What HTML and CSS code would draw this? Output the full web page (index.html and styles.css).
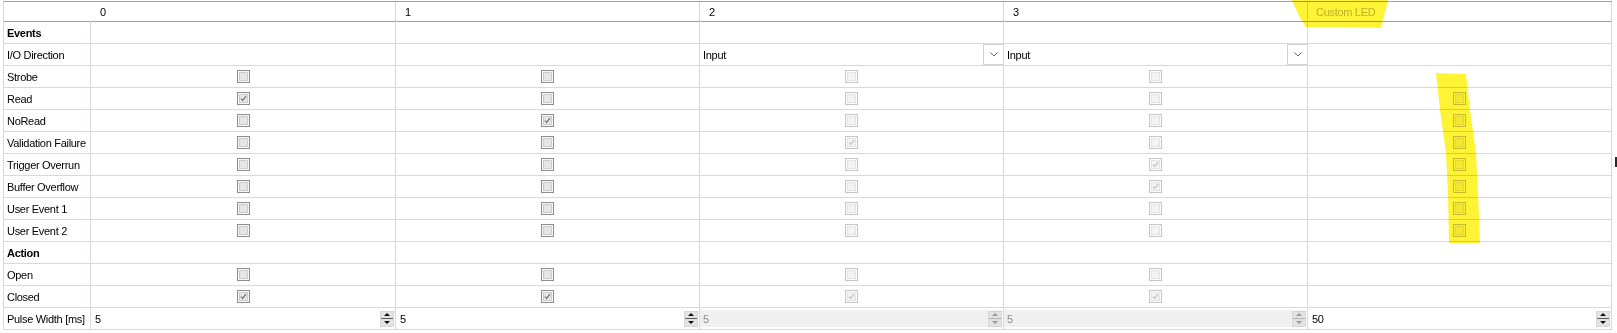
FILE: index.html
```html
<!DOCTYPE html>
<html lang="en">

<head>
    <meta charset="utf-8">
    <title>Output Settings</title>
    <link rel="stylesheet" href="styles.css">
</head>

<body id="app">
    <div id="grid">
        <!-- header -->
        <div class="cell hd first"></div>
        <div class="cell hd">0</div>
        <div class="cell hd">1</div>
        <div class="cell hd">2</div>
        <div class="cell hd">3</div>
        <div class="cell hd led">Custom LED</div>

        <div class="cell lbl bold">Events</div>
        <div class="cell"></div><div class="cell"></div><div class="cell"></div><div class="cell"></div><div class="cell"></div>

        <div class="cell lbl">I/O Direction</div>
        <div class="cell"></div>
        <div class="cell"></div>
        <div class="cell combo"><span>Input</span><span class="drop"><svg width="8" height="5" viewBox="0 0 8 5"><path d="M0.5 0.5 L4 4 L7.5 0.5" fill="none" stroke="#6a6a6a" stroke-width="1"/></svg></span></div>
        <div class="cell combo"><span>Input</span><span class="drop"><svg width="8" height="5" viewBox="0 0 8 5"><path d="M0.5 0.5 L4 4 L7.5 0.5" fill="none" stroke="#6a6a6a" stroke-width="1"/></svg></span></div>
        <div class="cell"></div>

        <div class="cell lbl">Strobe</div>
        <div class="cell c"><span class="chk"></span></div>
        <div class="cell c"><span class="chk"></span></div>
        <div class="cell c"><span class="chk dis"></span></div>
        <div class="cell c"><span class="chk dis"></span></div>
        <div class="cell"></div>

        <div class="cell lbl">Read</div>
        <div class="cell c"><span class="chk"><svg viewBox="0 0 13 13"><path d="M3.5 6.5 L5.5 8.8 L9.5 3.8"/></svg></span></div>
        <div class="cell c"><span class="chk"></span></div>
        <div class="cell c"><span class="chk dis"></span></div>
        <div class="cell c"><span class="chk dis"></span></div>
        <div class="cell c"><span class="chk dis"></span></div>

        <div class="cell lbl">NoRead</div>
        <div class="cell c"><span class="chk"></span></div>
        <div class="cell c"><span class="chk"><svg viewBox="0 0 13 13"><path d="M3.5 6.5 L5.5 8.8 L9.5 3.8"/></svg></span></div>
        <div class="cell c"><span class="chk dis"></span></div>
        <div class="cell c"><span class="chk dis"></span></div>
        <div class="cell c"><span class="chk dis"></span></div>

        <div class="cell lbl">Validation Failure</div>
        <div class="cell c"><span class="chk"></span></div>
        <div class="cell c"><span class="chk"></span></div>
        <div class="cell c"><span class="chk dis"><svg viewBox="0 0 13 13"><path d="M3.5 6.5 L5.5 8.8 L9.5 3.8"/></svg></span></div>
        <div class="cell c"><span class="chk dis"></span></div>
        <div class="cell c"><span class="chk dis"></span></div>

        <div class="cell lbl">Trigger Overrun</div>
        <div class="cell c"><span class="chk"></span></div>
        <div class="cell c"><span class="chk"></span></div>
        <div class="cell c"><span class="chk dis"></span></div>
        <div class="cell c"><span class="chk dis"><svg viewBox="0 0 13 13"><path d="M3.5 6.5 L5.5 8.8 L9.5 3.8"/></svg></span></div>
        <div class="cell c"><span class="chk dis"></span></div>

        <div class="cell lbl">Buffer Overflow</div>
        <div class="cell c"><span class="chk"></span></div>
        <div class="cell c"><span class="chk"></span></div>
        <div class="cell c"><span class="chk dis"></span></div>
        <div class="cell c"><span class="chk dis"><svg viewBox="0 0 13 13"><path d="M3.5 6.5 L5.5 8.8 L9.5 3.8"/></svg></span></div>
        <div class="cell c"><span class="chk dis"></span></div>

        <div class="cell lbl">User Event 1</div>
        <div class="cell c"><span class="chk"></span></div>
        <div class="cell c"><span class="chk"></span></div>
        <div class="cell c"><span class="chk dis"></span></div>
        <div class="cell c"><span class="chk dis"></span></div>
        <div class="cell c"><span class="chk dis"></span></div>

        <div class="cell lbl">User Event 2</div>
        <div class="cell c"><span class="chk"></span></div>
        <div class="cell c"><span class="chk"></span></div>
        <div class="cell c"><span class="chk dis"></span></div>
        <div class="cell c"><span class="chk dis"></span></div>
        <div class="cell c"><span class="chk dis"></span></div>

        <div class="cell lbl bold">Action</div>
        <div class="cell"></div><div class="cell"></div><div class="cell"></div><div class="cell"></div><div class="cell"></div>

        <div class="cell lbl">Open</div>
        <div class="cell c"><span class="chk"></span></div>
        <div class="cell c"><span class="chk"></span></div>
        <div class="cell c"><span class="chk dis"></span></div>
        <div class="cell c"><span class="chk dis"></span></div>
        <div class="cell"></div>

        <div class="cell lbl">Closed</div>
        <div class="cell c"><span class="chk"><svg viewBox="0 0 13 13"><path d="M3.5 6.5 L5.5 8.8 L9.5 3.8"/></svg></span></div>
        <div class="cell c"><span class="chk"><svg viewBox="0 0 13 13"><path d="M3.5 6.5 L5.5 8.8 L9.5 3.8"/></svg></span></div>
        <div class="cell c"><span class="chk dis"><svg viewBox="0 0 13 13"><path d="M3.5 6.5 L5.5 8.8 L9.5 3.8"/></svg></span></div>
        <div class="cell c"><span class="chk dis"><svg viewBox="0 0 13 13"><path d="M3.5 6.5 L5.5 8.8 L9.5 3.8"/></svg></span></div>
        <div class="cell"></div>

        <div class="cell lbl">Pulse Width [ms]</div>
        <div class="cell num"><div class="field"><span>5</span><span class="spin"><i class="up"></i><i class="dn"></i></span></div></div>
        <div class="cell num"><div class="field"><span>5</span><span class="spin"><i class="up"></i><i class="dn"></i></span></div></div>
        <div class="cell num"><div class="field off"><span>5</span><span class="spin"><i class="up"></i><i class="dn"></i></span></div></div>
        <div class="cell num"><div class="field off"><span>5</span><span class="spin"><i class="up"></i><i class="dn"></i></span></div></div>
        <div class="cell num"><div class="field"><span>50</span><span class="spin"><i class="up"></i><i class="dn"></i></span></div></div>
    </div>

    <!-- highlighter marks drawn over the grid -->
    <svg id="marker" width="1617" height="333" viewBox="0 0 1617 333">
        <polygon points="1292,0 1388,0 1381,28 1345,27 1306,27 1300,18" />
        <polygon points="1436,73 1466,74 1470,110 1476,153 1478,193 1480,243 1449,243 1448,193 1446,153 1440,110" />
    </svg>
    <span id="edge"></span>
</body>

</html>
```

FILE: styles.css
```css
#app * {
    box-sizing: border-box;
}

#app {
    margin: 0;
    position: relative;
    width: 1617px;
    height: 333px;
    background: #fff;
    color: #000;
    font-family: "Liberation Sans", Arial, sans-serif;
    font-size: 11px;
    letter-spacing: -0.3px;
    overflow: hidden;
}

#grid {
    display: grid;
    grid-template-columns: 87px 305px repeat(4, 304px);
    grid-template-rows: 20px;
    grid-auto-rows: 22px;
    width: max-content;
    margin: 1px 0 0 3px;
    border-top: 1px solid #a0a0a0;
    border-left: 1px solid #d5dae2;
}

.cell {
    display: flex;
    align-items: center;
    border-right: 1px solid #d5dae2;
    border-bottom: 1px solid #d5dae2;
    white-space: nowrap;
    overflow: hidden;
}

.hd {
    padding-left: 9px;
    border-bottom-color: #a0a0a0;
}

.hd.first {
    border-right-color: transparent;
}

.hd.led {
    padding-left: 8px;
    color: #bcbcbc;
}

.lbl {
    padding-left: 3px;
}

.bold {
    font-weight: bold;
}

.c {
    justify-content: center;
}

/* checkboxes */
.chk {
    display: block;
    width: 13px;
    height: 13px;
    border: 1px solid #8f8f8f;
    background: #e6e6e6;
    box-shadow: inset 0 0 0 1px #f7f7f7, inset 0 0 0 2px #cdcdcd;
}

.chk svg {
    display: block;
    width: 11px;
    height: 11px;
}

.chk path {
    fill: none;
    stroke: #6b6b6b;
    stroke-width: 1.3;
}

.chk.dis {
    border-color: #c6c6c6;
    background: #f3f3f3;
    box-shadow: inset 0 0 0 1px #fcfcfc, inset 0 0 0 2px #e3e3e3;
}

.chk.dis path {
    stroke: #bdbdbd;
}

/* combo box */
.combo {
    justify-content: space-between;
    padding-left: 3px;
}

.drop {
    display: flex;
    align-items: center;
    justify-content: center;
    width: 20px;
    height: 21px;
    border: 1px solid #d2d2d2;
    border-right: none;
    background: #fff;
}

/* numeric up/down */
.num {
    padding: 0 1px 0 0;
}

.field {
    display: flex;
    align-items: center;
    justify-content: space-between;
    width: 100%;
    height: 17px;
    padding-left: 4px;
}

.field.off {
    background: #f0f0f0;
    color: #8d8d8d;
    padding-left: 3px;
}

.spin {
    display: flex;
    flex-direction: column;
    width: 14px;
    height: 16px;
    background: #e3e3e3;
    border: 1px solid #d6d6d6;
}

.spin i {
    flex: 1;
    display: flex;
    align-items: center;
    justify-content: center;
}

.spin i::before {
    content: "";
    border-left: 3px solid transparent;
    border-right: 3px solid transparent;
}

.spin .up {
    border-bottom: 1px solid #5a5a5a;
}

.spin .up::before {
    border-bottom: 3px solid #111;
}

.spin .dn::before {
    border-top: 3px solid #111;
}

.off .spin .up {
    border-bottom-color: #b5b5b5;
}

.off .spin .up::before {
    border-bottom-color: #9a9a9a;
}

.off .spin .dn::before {
    border-top-color: #9a9a9a;
}

/* overlays */
#marker {
    position: absolute;
    left: 0;
    top: 0;
    pointer-events: none;
    mix-blend-mode: multiply;
}

#marker polygon {
    fill: #fff335;
}

#edge {
    position: absolute;
    left: 1615px;
    top: 157px;
    width: 2px;
    height: 10px;
    background: #2a2a2a;
}
```
